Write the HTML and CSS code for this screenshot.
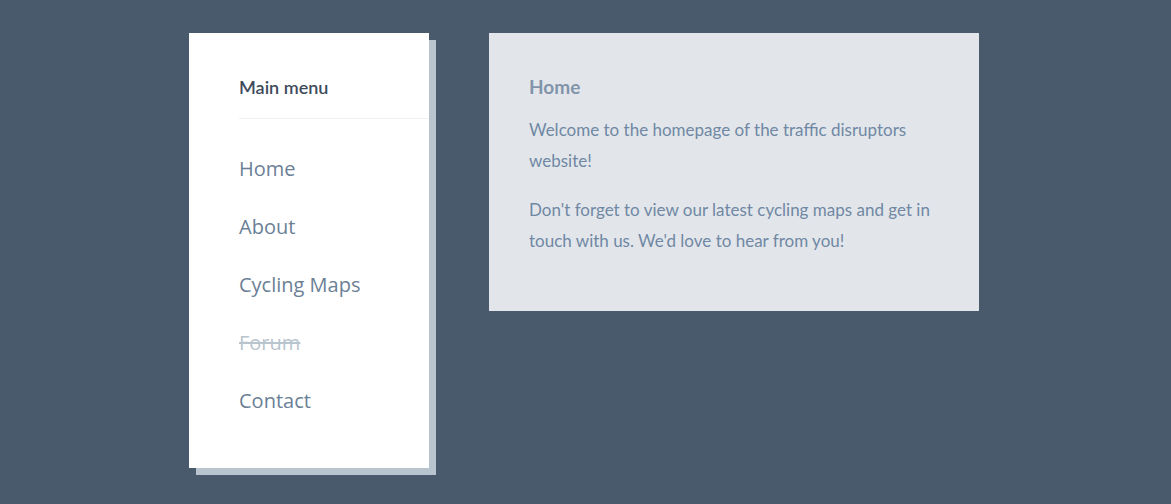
FILE: index.html
```html
<!DOCTYPE html>
<html>
<head>
<meta charset="utf-8">
<link rel="stylesheet" href="styles.css">
</head>
<body>
<div class="layout">
  <nav class="sidebar">
    <h2 class="menu-title">Main menu</h2>
    <ul class="menu">
      <li><a class="menu-link" href="#">Home</a></li>
      <li><a class="menu-link" href="#">About</a></li>
      <li><a class="menu-link" href="#">Cycling Maps</a></li>
      <li><a class="menu-link disabled" href="#">Forum</a></li>
      <li><a class="menu-link" href="#">Contact</a></li>
    </ul>
  </nav>
  <main class="content">
    <h1 class="content-title">Home</h1>
    <p class="content-text">Welcome to the homepage of the traffic disruptors website!</p>
    <p class="content-text">Don't forget to view our latest cycling maps and get in touch with us. We'd love to hear from you!</p>
  </main>
</div>
</body>
</html>
```
FILE: styles.css
```css
html, body {
  margin: 0;
  padding: 0;
  background: #4a5a6d;
  height: 100%;
}
body {
  font-family: "Lato", sans-serif;
}
.layout {
  display: flex;
  align-items: flex-start;
  gap: 60px;
  padding: 33px 0 0 189px;
}
.sidebar {
  width: 240px;
  height: 435px;
  box-sizing: border-box;
  background: #ffffff;
  padding: 0 0 0 50px;
  box-shadow: 7px 7px 0 #b8c4ce;
}
.menu-title {
  margin: 0;
  padding: 42px 0 19px;
  font-size: 18px;
  font-weight: 600;
  line-height: 24px;
  color: #3e4b5b;
  border-bottom: 1px solid #eef0f2;
  font-family: "Lato", sans-serif;
}
.menu {
  list-style: none;
  margin: 0;
  padding: 36px 0 0;
  display: flex;
  flex-direction: column;
  gap: 30px;
}
.menu-link {
  display: block;
  font-family: "Open Sans", sans-serif;
  font-size: 20px;
  line-height: 28px;
  color: #6b7f96;
  text-decoration: none;
}
.menu-link.disabled {
  color: #b8c4ce;
  text-decoration: line-through;
}
.content {
  width: 490px;
  box-sizing: border-box;
  background: #e2e6ea;
  padding: 42px 40px 40px;
}
.content-title {
  margin: 0 0 15px;
  font-family: "Lato", sans-serif;
  font-size: 19px;
  font-weight: 700;
  line-height: 24px;
  color: #8294aa;
}
.content-text {
  margin: 0 0 18px;
  font-family: "Lato", sans-serif;
  font-size: 17px;
  line-height: 31px;
  color: #7088a4;
}
.content-text:last-child {
  margin-bottom: 15px;
}
```
